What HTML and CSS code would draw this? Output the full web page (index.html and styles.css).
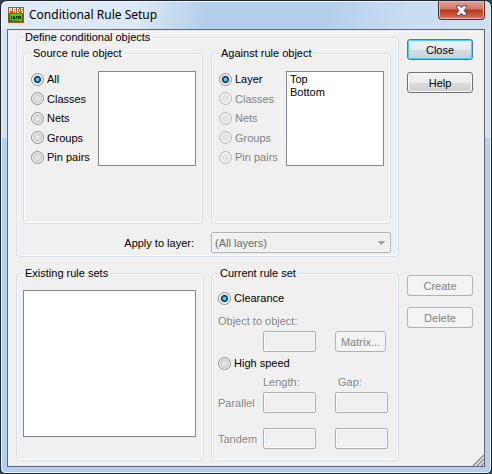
FILE: index.html
```html
<!DOCTYPE html>
<html lang="en">
<head>
<meta charset="utf-8">
<title>Conditional Rule Setup</title>
<link rel="stylesheet" href="styles.css">
</head>
<body>
<div class="window">
  <header class="titlebar">
    <svg class="app-icon" width="16" height="16" viewBox="0 0 16 16" aria-hidden="true" shape-rendering="crispEdges">
      <rect width="16" height="16" fill="#b0561c"/>
      <rect y="7" width="16" height="8" fill="#7a5a14"/>
      <path d="M1 1h3v3H2v2H1zM5 1h3v5H7V4H6v2H5zM9 1h2v1h1v3h-1v1H9zM13 1h2v1h-1v1h1v3h-2V5h1V4h-1z" fill="#fff3d0"/>
      <path d="M2 2h1v1H2zM6 2h1v1H6zM10 2h1v3h-1z" fill="#b0561c"/>
      <path d="M2 7h12v7H2z" fill="#4fc81c"/>
      <path d="M3 9h10v3H3zM2 13h2v1H2zM6 13h1v1H6zM9 13h1v1H9z" fill="#174a12"/>
      <path d="M4 9h1v2H4zM7 9h1v2H7zM9 10h1v2H9z" fill="#89a888"/>
    </svg>
    <h1 class="title">Conditional Rule Setup</h1>
    <button class="close" type="button" aria-label="Close window">
      <svg width="13" height="11" viewBox="0 0 13 11" aria-hidden="true"><path d="M1.500 .8H5l1.500 2 1.500-2h3.500v1.700L9 5.500l2.500 3v1.700H8l-1.500-2-1.500 2H1.500V8.500l2.500-3-2.500-3z" fill="#fff" stroke="#5a4650"/></svg>
    </button>
  </header>
  <form class="client">
    <div class="main">
      <fieldset class="group define">
        <legend>Define conditional objects</legend>
        <div class="pair">
          <fieldset class="group objects">
            <legend>Source rule object</legend>
            <div class="radios">
              <label><input type="radio" name="source" checked>All</label>
              <label><input type="radio" name="source">Classes</label>
              <label><input type="radio" name="source">Nets</label>
              <label><input type="radio" name="source">Groups</label>
              <label><input type="radio" name="source">Pin pairs</label>
            </div>
            <select class="list" size="5" aria-label="Source rule object"></select>
          </fieldset>
          <fieldset class="group objects">
            <legend>Against rule object</legend>
            <div class="radios">
              <label><input type="radio" name="against" checked>Layer</label>
              <label><input type="radio" name="against" disabled>Classes</label>
              <label><input type="radio" name="against" disabled>Nets</label>
              <label><input type="radio" name="against" disabled>Groups</label>
              <label><input type="radio" name="against" disabled>Pin pairs</label>
            </div>
            <select class="list" size="5" aria-label="Against rule object"><option>Top</option><option>Bottom</option></select>
          </fieldset>
        </div>
        <div class="apply">
          <label for="layer">Apply to layer:</label>
          <select id="layer" class="combo" disabled><option>(All layers)</option></select>
        </div>
      </fieldset>
      <div class="pair lower">
        <fieldset class="group existing">
          <legend>Existing rule sets</legend>
          <select class="list" size="8" aria-label="Existing rule sets"></select>
        </fieldset>
        <fieldset class="group current">
          <legend>Current rule set</legend>
          <label><input type="radio" name="kind" checked>Clearance</label>
          <label class="off object-label" for="object">Object to object:</label>
          <div class="fields">
            <span></span>
            <input id="object" class="field" type="text" disabled>
            <button class="button" type="button" disabled>Matrix...</button>
          </div>
          <label class="speed"><input type="radio" name="kind">High speed</label>
          <div class="fields heads off">
            <span></span><span id="len">Length:</span><span id="gap" class="gap-head">Gap:</span>
          </div>
          <div class="fields off">
            <span id="par">Parallel</span>
            <input class="field" type="text" aria-labelledby="par len" disabled>
            <input class="field" type="text" aria-labelledby="par gap" disabled>
          </div>
          <div class="fields tandem off">
            <span id="tan">Tandem</span>
            <input class="field" type="text" aria-labelledby="tan len" disabled>
            <input class="field" type="text" aria-labelledby="tan gap" disabled>
          </div>
        </fieldset>
      </div>
    </div>
    <div class="side">
      <div class="stack top">
        <button class="button default" type="button">Close</button>
        <button class="button" type="button">Help</button>
      </div>
      <div class="stack">
        <button class="button" type="button" disabled>Create</button>
        <button class="button" type="button" disabled>Delete</button>
      </div>
    </div>
    <svg class="grip" width="12" height="12" viewBox="0 0 12 12" aria-hidden="true"><path d="M1 12 12 1M5 12l7-7M9 12l3-3" stroke="#8c8c8c" stroke-width="1.500"/></svg>
  </form>
</div>
</body>
</html>
```
FILE: styles.css
```css
* { box-sizing: border-box; }

body {
  margin: 0;
  background: #33414f;
  color: #000;
  font: 11px/14px "Liberation Sans", Arial, sans-serif;
}

button, input, select { font: inherit; color: inherit; margin: 0; }

.window {
  display: flex;
  flex-direction: column;
  min-height: 100vh;
  padding: 0 6px 6px;
  border: 1px solid #20262e;
  border-radius: 7px 7px 5px 5px;
  background:
    linear-gradient(100deg, #e0ebf6 0, #dbe8f5 28%, #b3cfeb 42%, #b3cfeb 66%, #c9dcf1 82%, #cfdff2 100%) top / 100% 28px no-repeat,
    linear-gradient(#d5e3f3 137px, #b4cfec 137px);
  box-shadow: inset 0 0 0 1px #eef5fc;
}

.titlebar { display: flex; align-items: flex-start; height: 28px; }
.app-icon { margin: 6px 5px 0 1px; }
.title {
  flex: 1;
  margin: 6px 0 0;
  font: 12px/16px "Noto Sans", sans-serif;
}
.close {
  display: flex;
  align-items: center;
  justify-content: center;
  width: 47px;
  height: 19px;
  padding: 0;
  border: 1px solid #5a2a2c;
  border-top: 0;
  border-radius: 0 0 4px 4px;
  background: linear-gradient(#e2a094, #d0776a 45%, #b93822 50%, #cf5e45 85%, #e09080);
  box-shadow: inset 0 0 0 1px #e9b5ab;
}

.client {
  position: relative;
  flex: 1;
  display: flex;
  gap: 8px;
  padding: 0 11px 5px 8px;
  border: 1px solid #59687a;
  background: #f0f0f0;
}
.main { flex: 1; display: flex; flex-direction: column; gap: 9px; min-width: 0; }

.group {
  min-width: 0;
  margin: 0;
  border: 1px solid #d5dfe5;
  border-radius: 4px;
  box-shadow: inset 0 0 0 1px #fff;
}
legend { padding: 0 2px; line-height: 14px; background: #f0f0f0; }

.define { padding: 2px 7px 3px 6px; }
.pair { display: grid; grid-template-columns: 1fr 1fr; gap: 8px; }
.objects { display: grid; grid-template-columns: 1fr 98px; padding: 11px 6px 57px 7px; }
.objects .list { height: 95px; }
.radios { display: flex; flex-direction: column; justify-content: space-between; padding: 1px 0 2px; }

label { display: flex; align-items: center; }
label:has(input:disabled), .off { color: #838383; }
.off { text-shadow: 1px 1px #fff; }

input[type="radio"] {
  appearance: none;
  flex: none;
  width: 13px;
  height: 13px;
  margin-right: 3px;
  border: 1px solid #8e8f8f;
  border-radius: 50%;
  background: radial-gradient(circle, #e2e4e6 0 2px, #c8ccd0 4px, #f4f4f4 5px);
}
input[type="radio"]:checked {
  background: radial-gradient(circle, #69d5f8 0 1px, #126a9c 2px, #0e2f4e 3px, #d7dde2 4px, #f4f4f4 5px);
}
input[type="radio"]:disabled { border-color: #b8b8b8; background: radial-gradient(circle, #e4e4e4 3px, #f2f2f2 5px); }

.list {
  width: 100%;
  padding: 1px 3px;
  border: 1px solid #828790;
  border-radius: 0;
  background: #fff;
  overflow: hidden;
}
.list option { height: 13px; min-height: 13px; padding: 0; line-height: 13px; }

.apply { display: flex; align-items: center; justify-content: flex-end; gap: 17px; margin-top: 8px; }
.combo {
  appearance: none;
  width: 180px;
  height: 21px;
  padding: 0 3px;
  border: 1px solid #adb2b5;
  border-radius: 2px;
  color: #6d6d6d;
  opacity: 1;
  background:
    linear-gradient(to bottom left, #a0a0a0 50%, transparent 50%) right 8px center / 4px 4px no-repeat,
    linear-gradient(to bottom right, #a0a0a0 50%, transparent 50%) right 4px center / 4px 4px no-repeat,
    #f0f0f0;
  box-shadow: inset 0 0 0 1px #f8f8f8;
}

.lower { gap: 7px; }
.existing { padding: 10px 7px 22px 6px; }
.existing .list { display: block; height: 147px; }
.current { padding: 11px 6px; }
.object-label { margin: 9px 0 3px; }
.fields { display: grid; grid-template-columns: 45px 72px 53px; align-items: center; }
.field {
  width: 53px;
  height: 21px;
  border: 1px solid #afafaf;
  border-radius: 2px;
  background: #f0f0f0;
  box-shadow: inset 0 0 0 1px #fafafa;
}
.speed { margin: 4px 0 5px; }
.heads { margin-bottom: 3px; }
.gap-head { padding-left: 3px; }
.tandem { margin-top: 15px; }

.side { display: flex; flex-direction: column; justify-content: space-between; width: 66px; padding: 9px 0 133px; }
.stack { display: flex; flex-direction: column; gap: 11px; }
.stack.top { gap: 12px; }
.button {
  height: 21px;
  padding: 0;
  border: 1px solid #707070;
  border-radius: 3px;
  background: linear-gradient(#f2f2f2, #ebebeb 50%, #dddddd 50%, #cfcfcf);
  box-shadow: inset 0 0 0 1px #fafafa;
}
.default {
  border-color: #3c7fb1;
  background: linear-gradient(#eef3f6, #e3eaee 50%, #d3dde3 50%, #c6d3da);
  box-shadow: inset 0 0 0 1px #4ccdf5;
}
.button:disabled { border-color: #adb2b5; background: #f4f4f4; color: #838383; box-shadow: none; }
.current .button { width: 51px; }

.grip { position: absolute; right: 0; bottom: 0; }
```
